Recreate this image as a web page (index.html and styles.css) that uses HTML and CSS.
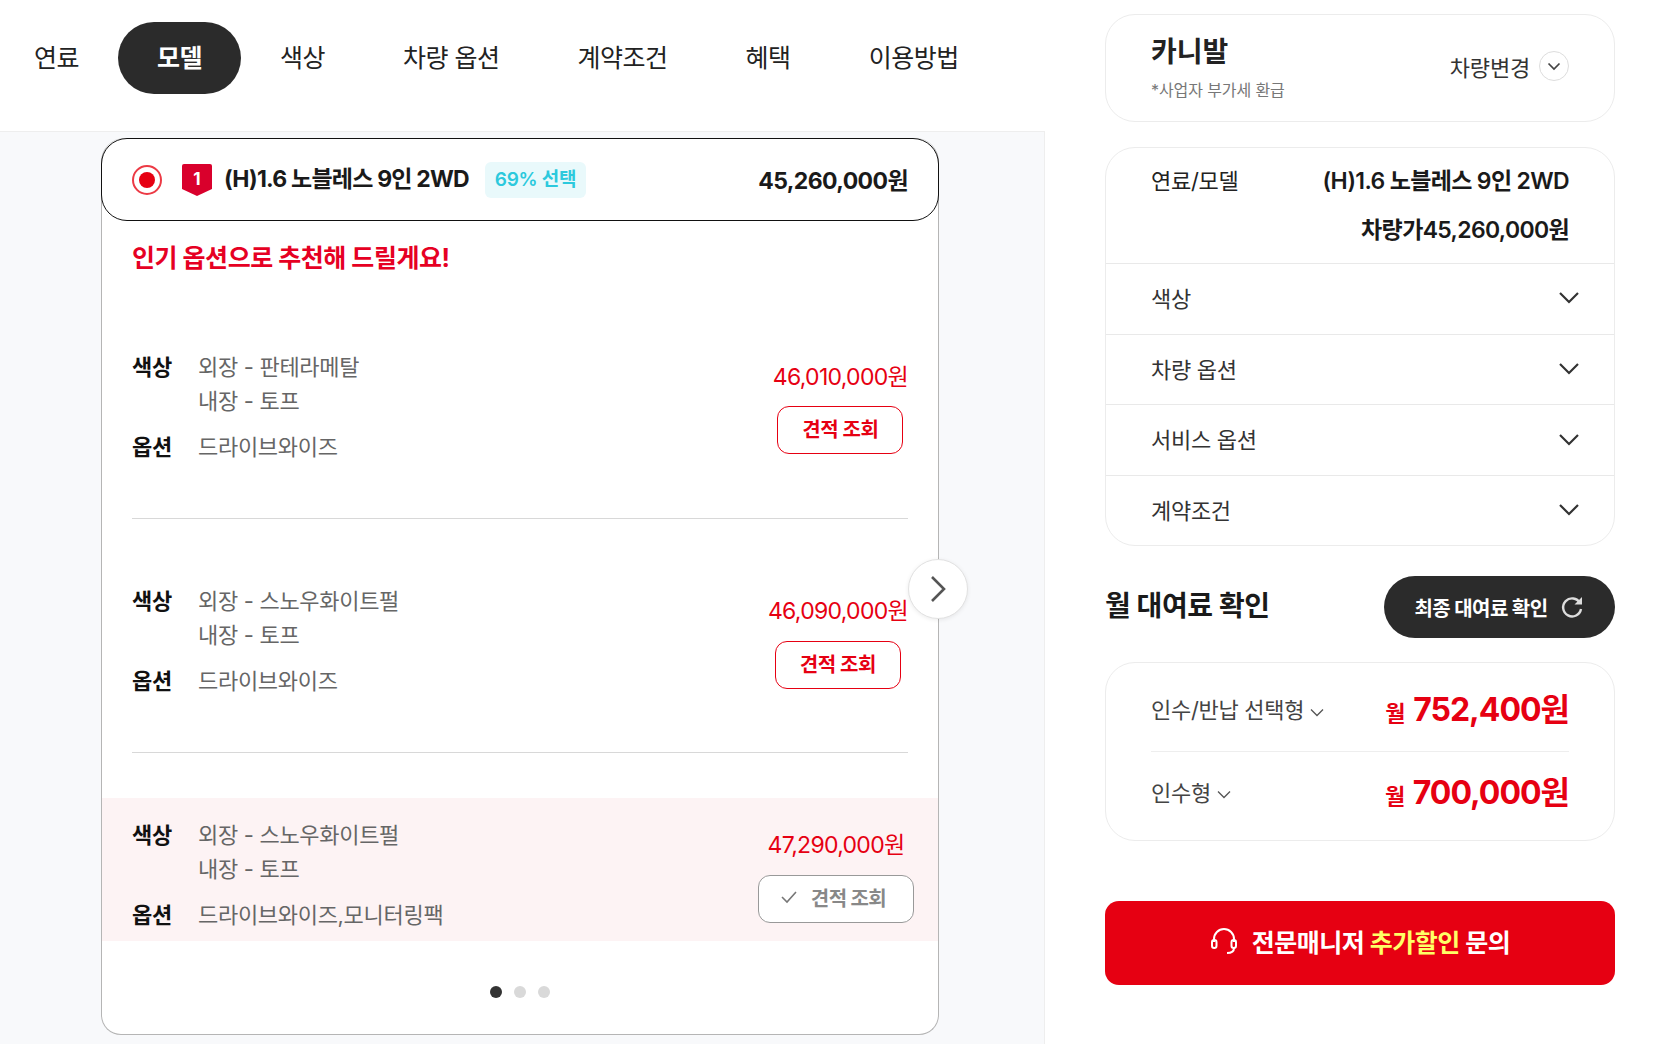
FILE: index.html
```html
<!DOCTYPE html>
<html lang="ko">

<head>
    <meta charset="UTF-8">
    <title>카니발</title>
    <link rel="stylesheet" href="styles.css">
</head>

<body>
    <div class="page">
        <div class="left">
            <ul class="tabs">
                <li>연료</li>
                <li class="current">모델</li>
                <li>색상</li>
                <li>차량 옵션</li>
                <li>계약조건</li>
                <li>혜택</li>
                <li>이용방법</li>
            </ul>
            <div class="panel">
                <div class="card">
                    <div class="card-head">
                        <span class="radio"></span>
                        <svg class="rank" width="30" height="32" viewBox="0 0 30 32">
                            <path d="M2 0H28A2 2 0 0 1 30 2V25L15 32L0 25V2A2 2 0 0 1 2 0Z" fill="#d9002c" />
                        </svg>
                        <span class="rank-no">1</span>
                        <strong class="model">(H)1.6 노블레스 9인 2WD</strong>
                        <span class="rate">69% 선택</span>
                        <strong class="model-price">45,260,000원</strong>
                    </div>
                    <h2 class="card-title">인기 옵션으로 추천해 드릴게요!</h2>

                    <div class="item">
                        <div class="info">
                            <b>색상</b>
                            <p>외장 - 판테라메탈<br>내장 - 토프</p>
                            <b>옵션</b>
                            <p>드라이브와이즈</p>
                        </div>
                        <div class="buy">
                            <span class="price">46,010,000원</span>
                            <a class="quote">견적 조회</a>
                        </div>
                    </div>
                    <hr class="line">
                    <div class="item">
                        <div class="info">
                            <b>색상</b>
                            <p>외장 - 스노우화이트펄<br>내장 - 토프</p>
                            <b>옵션</b>
                            <p>드라이브와이즈</p>
                        </div>
                        <div class="buy">
                            <span class="price">46,090,000원</span>
                            <a class="quote">견적 조회</a>
                        </div>
                    </div>
                    <hr class="line">
                    <div class="item picked">
                        <div class="info">
                            <b>색상</b>
                            <p>외장 - 스노우화이트펄<br>내장 - 토프</p>
                            <b>옵션</b>
                            <p>드라이브와이즈,모니터링팩</p>
                        </div>
                        <div class="buy">
                            <span class="price">47,290,000원</span>
                            <a class="quote done">
                                <svg width="18" height="14" viewBox="0 0 18 14" fill="none" stroke="#777" stroke-width="1.6">
                                    <path d="M2 7L7 12L16 2" />
                                </svg>
                                견적 조회
                            </a>
                        </div>
                    </div>
                    <ol class="dots">
                        <li class="current"></li>
                        <li></li>
                        <li></li>
                    </ol>
                    <span class="next">
                        <svg width="20" height="30" viewBox="0 0 20 30" fill="none" stroke="#555" stroke-width="2.6">
                            <path d="M4 3L16 15L4 27" />
                        </svg>
                    </span>
                </div>
            </div>
        </div>

        <div class="right">
            <div class="box car">
                <div>
                    <h1>카니발</h1>
                    <p>*사업자 부가세 환급</p>
                </div>
                <div class="change">
                    차량변경
                    <span class="change-icon">
                        <svg width="14" height="9" viewBox="0 0 14 9" fill="none" stroke="#444" stroke-width="1.7">
                            <path d="M1.5 1.5L7 7L12.5 1.5" />
                        </svg>
                    </span>
                </div>
            </div>

            <div class="box summary">
                <div class="sum-top">
                    <div class="sum-line">
                        <span>연료/모델</span>
                        <strong>(H)1.6 노블레스 9인 2WD</strong>
                    </div>
                    <div class="sum-line end">
                        <strong>차량가45,260,000원</strong>
                    </div>
                </div>
                <div class="sum-row">색상
                    <svg width="22" height="14" viewBox="0 0 22 14" fill="none" stroke="#333" stroke-width="2.2">
                        <path d="M2 2L11 11L20 2" />
                    </svg>
                </div>
                <div class="sum-row">차량 옵션
                    <svg width="22" height="14" viewBox="0 0 22 14" fill="none" stroke="#333" stroke-width="2.2">
                        <path d="M2 2L11 11L20 2" />
                    </svg>
                </div>
                <div class="sum-row">서비스 옵션
                    <svg width="22" height="14" viewBox="0 0 22 14" fill="none" stroke="#333" stroke-width="2.2">
                        <path d="M2 2L11 11L20 2" />
                    </svg>
                </div>
                <div class="sum-row">계약조건
                    <svg width="22" height="14" viewBox="0 0 22 14" fill="none" stroke="#333" stroke-width="2.2">
                        <path d="M2 2L11 11L20 2" />
                    </svg>
                </div>
            </div>

            <div class="fee-head">
                <h2>월 대여료 확인</h2>
                <a class="fee-btn">최종 대여료 확인
                    <svg width="24" height="24" viewBox="0 0 24 24" fill="none" stroke="#ddd" stroke-width="2.4">
                        <path d="M20 8A9 9 0 1 0 21 14" />
                        <path d="M22 2V9.5H14.5" stroke="none" fill="#ddd" />
                    </svg>
                </a>
            </div>

            <div class="box fee">
                <div class="fee-row">
                    <span class="fee-name">인수/반납 선택형
                        <svg width="14" height="9" viewBox="0 0 14 9" fill="none" stroke="#555" stroke-width="1.3">
                            <path d="M1 1.5L7 7.5L13 1.5" />
                        </svg>
                    </span>
                    <span class="fee-price"><small>월</small> 752,400원</span>
                </div>
                <div class="fee-row">
                    <span class="fee-name">인수형
                        <svg width="14" height="9" viewBox="0 0 14 9" fill="none" stroke="#555" stroke-width="1.3">
                            <path d="M1 1.5L7 7.5L13 1.5" />
                        </svg>
                    </span>
                    <span class="fee-price"><small>월</small> 700,000원</span>
                </div>
            </div>

            <a class="ask">
                <svg width="28" height="28" viewBox="0 0 28 28" fill="none" stroke="#fff" stroke-width="2">
                    <path d="M4 15V12A10 10 0 0 1 24 12V15" />
                    <rect x="2" y="13" width="4.5" height="8" rx="2.2" />
                    <rect x="21.5" y="13" width="4.5" height="8" rx="2.2" />
                    <path d="M24 21C24 25 21 26 17 26" />
                </svg>
                <span>전문매니저 <em>추가할인</em> 문의</span>
            </a>
        </div>
    </div>
</body>

</html>
```

FILE: styles.css
```css
* {
    padding: 0;
    margin: 0;
    list-style: none;
    box-sizing: border-box;
}

html,
body {
    height: 100%;
    overflow: hidden;
}

body {
    font-family: Inter, "Noto Sans CJK KR", sans-serif;
    color: #222;
    background: #fff;
}

.page {
    display: flex;
    height: 1044px;
}

/* 왼쪽 */
.left {
    width: 1045px;
    display: flex;
    flex-direction: column;
}

.tabs {
    display: flex;
    align-items: center;
    height: 132px;
    padding: 0 0 16px 34px;
    font-size: 25px;
    letter-spacing: -0.5px;
    border-bottom: 1px solid #eee;
    flex: none;
}

.tabs li {
    padding: 0 39px;
    height: 72px;
    line-height: 73px;
    white-space: nowrap;
}

.tabs li:first-child {
    padding-left: 0;
}

.tabs .current {
    background: #2b2b2b;
    color: #fff;
    font-weight: 700;
    border-radius: 36px;
}

.panel {
    flex: 1;
    padding: 6px 0 0 101px;
    background: #f8f9fb;
    border-right: 1px solid #eee;
}

.card {
    position: relative;
    width: 838px;
    height: 897px;
    background: #fff;
    border: 1px solid #b5b5b5;
    border-top: 0;
    border-radius: 24px 24px 20px 20px;
}

.card-head {
    display: flex;
    align-items: center;
    position: relative;
    height: 83px;
    margin: 0 -1px;
    padding: 0 30px;
    border: 1px solid #111;
    border-radius: 26px;
}

.radio {
    width: 30px;
    height: 30px;
    border: 2px solid #ec3a45;
    border-radius: 50%;
    position: relative;
    flex: none;
}

.radio:after {
    content: '';
    position: absolute;
    left: 5px;
    top: 5px;
    width: 16px;
    height: 16px;
    background: #e60012;
    border-radius: 50%;
}

.rank {
    margin-left: 20px;
    flex: none;
}

.rank-no {
    position: absolute;
    left: 80px;
    width: 30px;
    margin-top: -2px;
    text-align: center;
    font-size: 17px;
    font-weight: 700;
    color: #fff;
}

.model {
    margin: -6px 0 0 12px;
    font-size: 23px;
    font-weight: 700;
    letter-spacing: -0.8px;
    color: #1a1a1a;
}

.rate {
    margin-left: 16px;
    padding: 0 10px;
    height: 36px;
    line-height: 36px;
    font-size: 19px;
    font-weight: 600;
    color: #2cc9dd;
    background: #e9f9fb;
    border-radius: 6px;
    letter-spacing: -0.3px;
}

.model-price {
    margin: -2px 0 0 auto;
    font-size: 23px;
    font-weight: 700;
    letter-spacing: -0.6px;
    color: #1a1a1a;
}

.card-title {
    padding: 20px 30px 10px;
    height: 64px;
    line-height: 34px;
    font-size: 25px;
    font-weight: 700;
    letter-spacing: -0.45px;
    color: #e60023;
}

.item {
    display: flex;
    justify-content: space-between;
    height: 143px;
    margin: 45px 0;
    padding: 20px 30px 0;
}

.picked {
    background: #fdf3f4;
    margin-bottom: 0;
    padding-right: 24px;
}

.info {
    display: grid;
    grid-template-columns: 66px 1fr;
    row-gap: 12px;
    align-content: start;
    font-size: 22px;
    line-height: 34px;
    letter-spacing: -0.3px;
}

.info b {
    font-weight: 600;
    color: #111;
}

.info p {
    color: #666;
}

.buy {
    display: flex;
    flex-direction: column;
    align-items: center;
    gap: 13px;
    padding-top: 10px;
}

.card-title + .item .buy {
    gap: 12px;
}

.price {
    font-size: 23px;
    line-height: 34px;
    letter-spacing: -0.7px;
    color: #e60012;
    white-space: nowrap;
}

.quote {
    display: flex;
    align-items: center;
    justify-content: center;
    gap: 14px;
    width: 126px;
    height: 48px;
    padding-bottom: 4px;
    font-size: 20px;
    font-weight: 700;
    letter-spacing: -0.4px;
    color: #e60012;
    background: #fff;
    border: 1px solid #e60012;
    border-radius: 12px;
}

.done {
    width: 156px;
    padding-right: 6px;
    gap: 13px;
    letter-spacing: -0.6px;
    color: #888;
    border-color: #999;
}

.line {
    margin: 0 30px;
    border: 0;
    border-top: 1px solid #d8d8d8;
}

.dots {
    display: flex;
    justify-content: center;
    gap: 12px;
    padding-top: 45px;
}

.dots li {
    width: 12px;
    height: 12px;
    border-radius: 50%;
    background: #d9d9d9;
}

.dots .current {
    background: #333;
}

.next {
    position: absolute;
    right: -30px;
    top: 421px;
    width: 60px;
    height: 60px;
    display: flex;
    align-items: center;
    justify-content: center;
    background: #fff;
    border: 1px solid #e2e2e2;
    border-radius: 50%;
    box-shadow: 0 1px 4px rgba(0, 0, 0, 0.08);
}

/* 오른쪽 */
.right {
    margin-left: 60px;
    padding-top: 14px;
    width: 510px;
}

.box {
    border: 1px solid #ececec;
    border-radius: 30px;
}

.car {
    display: flex;
    justify-content: space-between;
    align-items: center;
    height: 108px;
    padding: 0 45px;
}

.car h1 {
    font-size: 28px;
    line-height: 38px;
    font-weight: 700;
    margin-top: -1px;
}

.car p {
    margin-top: 7px;
    font-size: 16px;
    line-height: 24px;
    color: #777;
    letter-spacing: -0.1px;
}

.change {
    display: flex;
    align-items: center;
    gap: 9px;
    margin-top: -4px;
    font-size: 22px;
    letter-spacing: -0.2px;
    color: #333;
}

.change-icon {
    display: flex;
    align-items: center;
    justify-content: center;
    width: 30px;
    height: 30px;
    border: 1px solid #ddd;
    border-radius: 50%;
}

.summary {
    margin-top: 25px;
    height: 399px;
}

.sum-top {
    height: 115px;
    padding: 11px 45px 0;
}

.sum-line {
    display: flex;
    justify-content: space-between;
    height: 49px;
    line-height: 44px;
    font-size: 22px;
    letter-spacing: -0.3px;
}

.sum-line strong {
    font-size: 23px;
    font-weight: 600;
    letter-spacing: -0.65px;
    color: #1a1a1a;
}

.end {
    justify-content: flex-end;
}

.sum-row {
    display: flex;
    justify-content: space-between;
    align-items: center;
    height: 70.7px;
    padding: 0 34px 4px 45px;
    border-top: 1px solid #e9e9e9;
    font-size: 22px;
    letter-spacing: -0.3px;
    color: #333;
}

.sum-row svg {
    margin-top: 3px;
}

.fee-head {
    display: flex;
    justify-content: space-between;
    align-items: center;
    margin-top: 30px;
}

.fee-head h2 {
    padding-bottom: 6px;
    font-size: 28px;
    font-weight: 700;
    letter-spacing: -0.4px;
    color: #1a1a1a;
}

.fee-btn {
    display: flex;
    align-items: center;
    justify-content: center;
    gap: 13px;
    width: 231px;
    height: 62px;
    border-radius: 31px;
    background: #2b2b2b;
    color: #fff;
    font-size: 20px;
    font-weight: 700;
    letter-spacing: -0.6px;
}

.fee {
    margin-top: 24px;
    height: 179px;
    padding: 0 45px;
}

.fee-row {
    display: flex;
    justify-content: space-between;
    align-items: center;
    height: 88px;
}

.fee-row + .fee-row {
    padding-bottom: 12px;
    border-top: 1px solid #eee;
}

.fee-name {
    padding-top: 2px;
    font-size: 22px;
    letter-spacing: -0.3px;
    color: #444;
}

.fee-name svg {
    vertical-align: middle;
}

.fee-price {
    font-size: 32px;
    font-weight: 700;
    letter-spacing: -1px;
    color: #e60012;
}

.fee-price small {
    margin-right: 2px;
    font-size: 22px;
}

.ask {
    display: flex;
    align-items: center;
    justify-content: center;
    gap: 14px;
    margin-top: 60px;
    height: 84px;
    padding-bottom: 4px;
    background: #e60012;
    border-radius: 14px;
    color: #fff;
    font-size: 25px;
    font-weight: 700;
    letter-spacing: -0.5px;
}

.ask em {
    font-style: normal;
    color: #ffff66;
}
```
